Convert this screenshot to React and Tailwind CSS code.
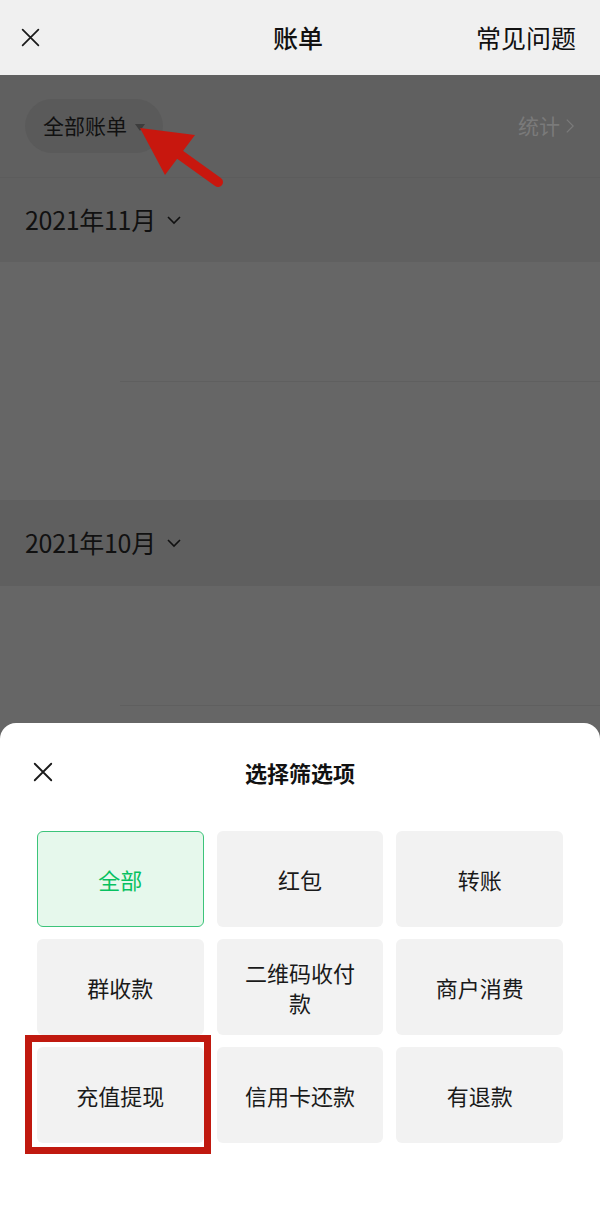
import React from 'react';

const options = ['全部', '红包', '转账', '群收款', '二维码收付款', '商户消费', '充值提现', '信用卡还款', '有退款'];

function CloseIcon({ className }) {
  return (
    <svg viewBox="0 0 24 24" className={className} fill="none" stroke="currentColor" strokeWidth="2" strokeLinecap="round">
      <path d="M3 3L21 21M21 3L3 21" />
    </svg>
  );
}

function Chevron({ className }) {
  return (
    <svg viewBox="0 0 16 10" className={className} fill="none" stroke="currentColor" strokeWidth="1.6">
      <path d="M2 2L8 8L14 2" />
    </svg>
  );
}

export default function App() {
  return (
    <div className="w-[600px] h-[1232px] overflow-hidden bg-[#666666] text-[#111] font-['Noto_Sans_CJK_SC','Noto_Sans',sans-serif] flex flex-col">
      {/* Header */}
      <div className="h-[75px] bg-[#f0f0f0] grid grid-cols-[1fr_auto_1fr] items-center pl-[20px] pr-[24px] shrink-0">
        <CloseIcon className="w-[21px] h-[21px] text-[#1a1a1a]" />
        <div className="text-[25px] font-medium">账单</div>
        <div className="text-[25px] text-right">常见问题</div>
      </div>

      {/* Dimmed content */}
      <div className="relative flex flex-col shrink-0">
        <div className="h-[103px] bg-[#606060] flex items-center justify-between pl-[25px] pr-[26px] border-b border-[#5c5c5c]">
          <div className="h-[54px] rounded-full bg-[#5a5a5a] flex items-center pl-[18px] pr-[18px] gap-[8px]">
            <span className="text-[21px]">全部账单</span>
            <span className="w-0 h-0 border-l-[5px] border-r-[5px] border-t-[7px] border-l-transparent border-r-transparent border-t-[#3d3d3d] mt-[2px]" />
          </div>
          <div className="flex items-center gap-[6px] text-[#7a7a7a] text-[21px]">
            <span>统计</span>
            <svg viewBox="0 0 10 18" className="w-[8px] h-[16px]" fill="none" stroke="currentColor" strokeWidth="1.6">
              <path d="M1 1L9 9L1 17" />
            </svg>
          </div>
        </div>
        <div className="h-[84px] bg-[#606060] flex items-center pl-[25px] gap-[10px]">
          <span className="text-[25px] tracking-[-0.3px]">2021年11月</span>
          <Chevron className="w-[16px] h-[10px]" />
        </div>
        <div className="h-[238px] bg-[#666666] flex flex-col">
          <div className="h-[120px] border-b border-[#5f5f5f] ml-[120px]" />
        </div>
        <div className="h-[86px] bg-[#5f5f5f] flex items-center pl-[25px] gap-[10px]">
          <span className="text-[25px] tracking-[-0.3px]">2021年10月</span>
          <Chevron className="w-[16px] h-[10px]" />
        </div>
        <div className="h-[137px] bg-[#666666] flex flex-col">
          <div className="h-[120px] border-b border-[#5f5f5f] ml-[120px]" />
        </div>

        {/* red arrow annotation */}
        <svg className="absolute left-[130px] top-[45px] w-[100px] h-[75px]" viewBox="0 0 100 75">
          <path d="M88 62L35 24" stroke="#c8170e" strokeWidth="10" strokeLinecap="round" />
          <path d="M10 8L65 15L35 55Z" fill="#c8170e" />
        </svg>
      </div>

      {/* Bottom sheet */}
      <div className="flex-1 bg-white rounded-t-[16px] flex flex-col">
        <div className="h-[98px] relative flex items-center justify-center">
          <CloseIcon className="absolute left-[32px] w-[22px] h-[22px] text-[#1a1a1a]" />
          <div className="text-[22px] font-bold">选择筛选项</div>
        </div>
        <div className="grid grid-cols-3 gap-x-[13px] gap-y-[12px] px-[37px] pt-[10px]">
          {options.map((opt, i) => (
            <div key={opt} className="relative">
              <div
                className={
                  i === 0
                    ? 'h-[96px] rounded-[6px] bg-[#e6f8ec] border border-[#3cc47a] text-[#07c160] flex items-center justify-center text-center text-[22px] leading-[30px] px-[24px]'
                    : 'h-[96px] rounded-[6px] bg-[#f2f2f2] text-[#1a1a1a] flex items-center justify-center text-center text-[22px] leading-[30px] px-[24px]'
                }
              >
                {opt}
              </div>
              {i === 6 && (
                <div className="absolute -left-[12px] -top-[12px] -right-[7px] -bottom-[11px] border-[7px] border-[#c0190f]" />
              )}
            </div>
          ))}
        </div>
      </div>
    </div>
  );
}
